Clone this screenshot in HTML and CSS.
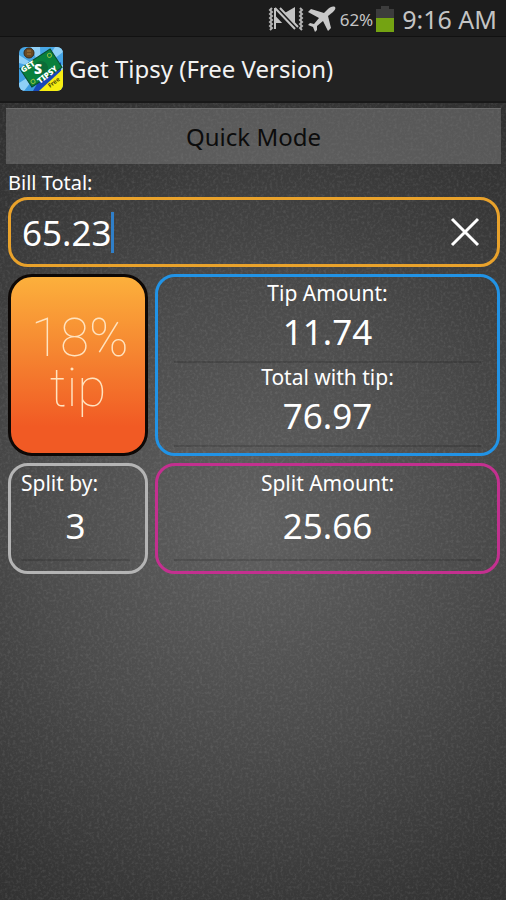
FILE: index.html
```html
<!DOCTYPE html>
<html lang="en">
<head>
  <meta charset="UTF-8">
  <meta name="viewport" content="width=device-width, initial-scale=1.0">
  <title>Get Tipsy (Free Version)</title>
  <link rel="stylesheet" href="styles.css">
</head>
<body>
  <svg class="grain" aria-hidden="true">
    <filter id="grain" x="0" y="0" width="100%" height="100%">
      <feTurbulence type="fractalNoise" baseFrequency="0.37" numOctaves="2" seed="4"/>
      <feColorMatrix values="0 0 0 0 1  0 0 0 0 1  0 0 0 0 1  1.6 0 0 0 -0.7"/>
    </filter>
    <rect width="100%" height="100%" filter="url(#grain)"/>
  </svg>

  <div class="status-bar">
    <svg class="mute-icon" width="36" height="26" viewBox="0 0 36 26" aria-hidden="true">
      <path d="M7 8h8L27 1v23l-12-7H7z" fill="#c4c4c4"/>
      <path d="M6 2l22 23" stroke="#1c1c1c" stroke-width="9"/>
      <path d="M7 2v21" stroke="#c4c4c4" stroke-width="2"/>
      <path d="M7 2l20 21M12 2l18 19" stroke="#c4c4c4" stroke-width="2"/>
      <path d="M4 2l-2 2 2 2-2 2 2 2-2 2 2 2-2 2 2 2-2 2 2 2-2 2M32 2l2 2-2 2 2 2-2 2 2 2-2 2 2 2-2 2 2 2-2 2 2 2" fill="none" stroke="#b4b4b4" stroke-width="2"/>
    </svg>
    <svg class="plane-icon" width="28" height="26" viewBox="0 0 28 26" aria-hidden="true">
      <path d="M27 1c-2-1-5 0-7 2l-4 4L3 3 0 6l11 6-5 6-4-1-2 2 5 2 2 5 2-2v-4l6-5 5 10 3-3-3-12 5-4c2-2 3-4 2-5z" fill="#c8c8c8"/>
    </svg>
    <span class="percent">62%</span>
    <svg class="battery-icon" width="18" height="26" viewBox="0 0 18 26" aria-hidden="true">
      <path d="M5 0h8v3h5v23H0V3h5z" fill="#3c3c3c"/>
      <path d="M0 12h18v14H0z" fill="#74a312"/>
    </svg>
    <span class="clock">9:16 AM</span>
  </div>

  <header class="app-bar">
    <svg class="logo" width="44" height="44" viewBox="0 0 44 44" aria-hidden="true">
      <defs>
        <clipPath id="tile"><rect width="44" height="44" rx="6"/></clipPath>
        <linearGradient id="sky" x1="0" y1="0" x2="0" y2="1">
          <stop offset="0" stop-color="#48a7e6"/>
          <stop offset="1" stop-color="#3d9be0"/>
        </linearGradient>
      </defs>
      <g clip-path="url(#tile)">
        <rect width="44" height="44" fill="url(#sky)"/>
        <path d="M22 22L12 0h9zM22 22L36 0h8v5zM22 22L0 8v8zM22 22L0 36v8h5zM22 22L44 18v9z" fill="#8fd0f7"/>
        <path d="M18 37l24-22v9L28 44H14z" fill="#1746b8"/>
        <g transform="rotate(-33 22 21)">
          <rect x="4" y="10" width="36" height="22" fill="#08803d" stroke="#0a4c2c"/>
          <circle cx="22" cy="21" r="7" fill="#0b6c38"/>
          <circle cx="8" cy="28" r="2" fill="none" stroke="#86b83c"/>
          <circle cx="36" cy="15" r="2" fill="none" stroke="#86b83c"/>
        </g>
        <circle cx="10" cy="6" r="5" fill="#6b4a24" stroke="#3d2a18"/>
        <path d="M8 4h4M8 7h4" stroke="#a97b3f"/>
        <path d="M44 22v22H20z" fill="#f7ed12"/>
      </g>
      <text class="logo-word" x="4" y="26" font-size="8" transform="rotate(-33 4 26)">GET</text>
      <text class="logo-word" x="15" y="27" font-size="14">S</text>
      <text class="logo-word" x="21" y="37" font-size="8" transform="rotate(-38 21 37)">TIPSY</text>
      <text class="logo-free" x="31" y="41" font-size="6" transform="rotate(-38 31 41)">Free</text>
    </svg>
    <h1>Get Tipsy (Free Version)</h1>
  </header>

  <main class="calculator">
    <button class="mode-btn" type="button">Quick Mode</button>

    <form class="form">
      <label class="bill-label" for="bill">Bill Total:</label>
      <div class="panel bill">
        <input class="bill-input" id="bill" type="text" inputmode="decimal" size="5" value="65.23">
        <span class="caret"></span>
        <button class="clear-btn" type="button" aria-label="Clear">
          <svg width="30" height="30" viewBox="0 0 30 30" aria-hidden="true">
            <path d="M2 2l26 26M28 2L2 28" stroke="#fff" stroke-width="3"/>
          </svg>
        </button>
      </div>

      <button class="tip-btn" type="button">18% tip</button>

      <div class="panel totals">
        <div class="field">
          <label for="tip">Tip Amount:</label>
          <output class="value" id="tip">11.74</output>
        </div>
        <div class="field">
          <label for="total">Total with tip:</label>
          <output class="value" id="total">76.97</output>
        </div>
      </div>

      <div class="panel people">
        <div class="field split-field">
          <label class="people-label" for="people">Split by:</label>
          <input class="value" id="people" type="text" inputmode="numeric" size="2" value="3">
        </div>
      </div>

      <div class="panel split">
        <div class="field split-field">
          <label for="split">Split Amount:</label>
          <output class="value" id="split">25.66</output>
        </div>
      </div>
    </form>
  </main>
</body>
</html>
```

FILE: styles.css
```css
* {
  box-sizing: border-box;
}
body {
  margin: 0;
  min-height: 100vh;
  position: relative;
  background: radial-gradient(ellipse 110% 62% at 50% 58%, #606060 0%, #4b4b4b 40%, #363636 72%, #2a2a2a 100%);
  font-family: "Noto Sans", sans-serif;
  color: #fff;
}
button,
input {
  font-family: inherit;
  color: inherit;
  border: none;
  background: none;
  padding: 0;
  margin: 0;
  outline: none;
}
.grain {
  position: absolute;
  top: 0;
  left: 0;
  width: 100%;
  height: 100%;
  opacity: 0.12;
  pointer-events: none;
}

/* status bar */
.status-bar {
  position: relative;
  display: flex;
  justify-content: flex-end;
  align-items: center;
  height: 37px;
  padding: 2px 9px 0 0;
  background: #1c1c1c;
  border-bottom: 1px solid #111;
  color: #c4c4c4;
}
.mute-icon {
  margin-right: 4px;
}
.plane-icon {
  margin-right: 4px;
}
.percent {
  font-size: 17px;
  margin-right: 3px;
}
.battery-icon {
  margin-right: 8px;
}
.clock {
  font-size: 25px;
  line-height: 34px;
}

/* title bar */
.app-bar {
  position: relative;
  display: flex;
  align-items: center;
  gap: 6px;
  height: 66px;
  padding: 0 19px;
  background: #222;
  border-bottom: 2px solid #191919;
}
.app-bar h1 {
  margin: 0;
  font-size: 24px;
  font-weight: 400;
  line-height: 32px;
  color: #f2f2f2;
}
.logo-word {
  font-family: "Noto Sans", sans-serif;
  font-weight: 900;
  fill: #fff;
}
.logo-free {
  font-family: "Noto Sans", sans-serif;
  font-weight: 700;
  fill: #4a4608;
}

/* calculator */
.calculator {
  position: relative;
  padding: 5px 5px 24px 6px;
}
.mode-btn {
  display: block;
  width: 100%;
  height: 56px;
  background: rgba(140, 140, 140, 0.42);
  border-top: 1px solid #6c6c6c;
  color: #0c0c0c;
  font-size: 24px;
}
.form {
  display: grid;
  grid-template-columns: 140px 1fr;
  gap: 7px;
  padding: 5px 1px 0 2px;
}
.form label {
  font-size: 21px;
  line-height: 28px;
}
.form .bill-label {
  grid-column: 1 / -1;
  margin-bottom: -7px;
  font-size: 20px;
}
.panel {
  border: 3px solid #fff;
  border-radius: 20px;
}
.bill {
  grid-column: 1 / -1;
  display: flex;
  align-items: center;
  height: 70px;
  padding: 0 17px 0 11px;
  border-color: #e9a22b;
}
.bill-input {
  field-sizing: content;
  height: 48px;
  font-size: 35px;
}
.caret {
  width: 3px;
  height: 41px;
  background: #2f7fc9;
}
.clear-btn {
  display: flex;
  margin-left: auto;
  cursor: pointer;
}
.tip-btn {
  padding: 0 20px 4px;
  border: 3px solid #0d0806;
  border-radius: 24px;
  background: linear-gradient(#fcb03c 0%, #f58330 45%, #f15a24 85%);
  color: #ffe3bf;
  font-family: Roboto, sans-serif;
  font-size: 53px;
  font-weight: 100;
  line-height: 50px;
  cursor: pointer;
}
.totals {
  height: 182px;
  padding: 2px 16px 0;
  border-color: #2193e6;
}
.field {
  display: flex;
  flex-direction: column;
  align-items: center;
  height: 84px;
  border-bottom: 2px solid rgba(0, 0, 0, 0.14);
}
.value {
  width: 100%;
  font-size: 35px;
  line-height: 50px;
  text-align: center;
}
.people,
.split {
  height: 111px;
  padding: 3px 16px 0;
}
.people {
  padding: 3px 15px 0 10px;
  border-color: #b4b4b4;
}
.split {
  border-color: #c3308f;
}
.split-field {
  height: 92px;
  gap: 4px;
}
.people-label {
  align-self: flex-start;
}
```
